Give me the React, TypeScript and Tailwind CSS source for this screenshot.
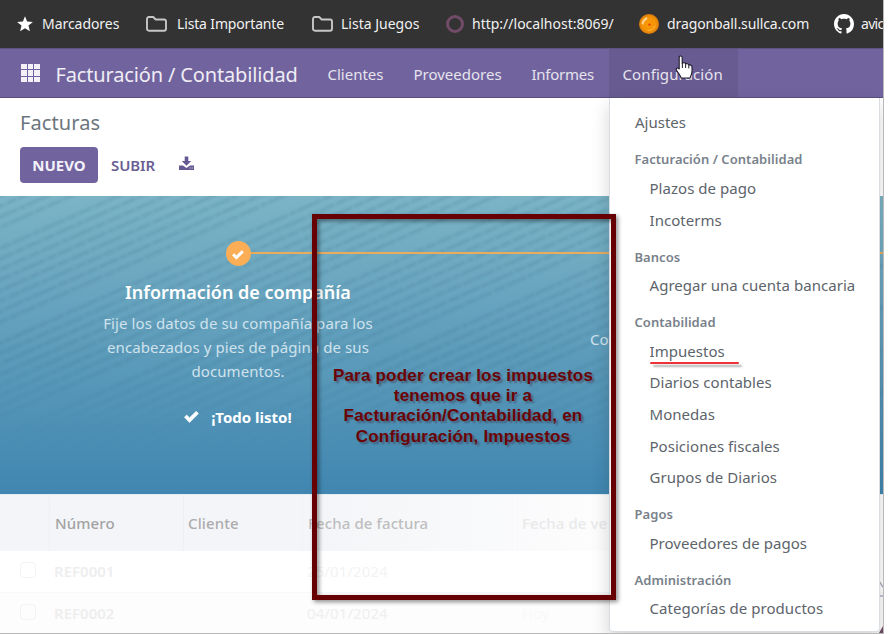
import React from "react";

const rows = Array.from({ length: 30 }, (_, i) => i);

function Folder() {
  return (
    <svg className="h-4 w-[21px] shrink-0" viewBox="0 0 21 16" fill="none" stroke="#c7c7c7" strokeWidth="1.9">
      <path d="M1 3.2Q1 1 3 1H7.2L9.7 3.5H18Q20 3.5 20 5.5V12.7Q20 14.7 18 14.7H3Q1 14.7 1 12.7Z" strokeLinejoin="round" />
    </svg>
  );
}

function Check({ className }: { className: string }) {
  return (
    <svg className={className} viewBox="0 0 15 12" fill="#fff">
      <path d="M.4 6.3 2.7 4 5.5 6.8 12.2.3 14.5 2.6 5.5 11.5Z" stroke="#fff" strokeWidth=".6" strokeLinejoin="round" />
    </svg>
  );
}

function Bookmarks() {
  return (
    <div className="flex h-[48px] items-center overflow-hidden bg-[#333333] pl-[17px] text-[14px] text-[#f1f1f1]">
      <svg className="h-[16px] w-[16px] shrink-0" viewBox="0 0 16 16" fill="#fff">
        <path d="M8 .3 10.1 5.5 15.9 5.9 11.5 9.6 12.9 15.3 8 12.2 3.1 15.3 4.5 9.6.1 5.9 5.9 5.5Z" />
      </svg>
      <span className="-mt-px ml-[9px] w-[104px] shrink-0 tracking-[-0.05px]">Marcadores</span>
      <Folder />
      <span className="-mt-px ml-[10px] w-[135px] shrink-0 tracking-[-0.15px]">Lista Importante</span>
      <Folder />
      <span className="-mt-px ml-[8px] w-[105px] shrink-0">Lista Juegos</span>
      <span className="h-[18px] w-[18px] shrink-0 rounded-full border-[3px] border-[#714b67]" />
      <span className="-mt-px ml-[8px] w-[167px] shrink-0">http://localhost:8069/</span>
      <svg className="h-5 w-5 shrink-0" viewBox="0 0 20 20">
        <defs>
          <radialGradient id="ball" cx=".5" cy=".5" r=".5">
            <stop offset="0" stopColor="#f99a08" />
            <stop offset=".7" stopColor="#f49306" />
            <stop offset="1" stopColor="#d9790a" />
          </radialGradient>
        </defs>
        <circle cx="10" cy="10" r="10" fill="url(#ball)" />
        <path d="M3.6 9.5A7 7 0 0 1 7.4 4.4" stroke="#fdd38b" strokeWidth="2.2" fill="none" strokeLinecap="round" />
        <path d="M9 16.5A7 7 0 0 0 16 12" stroke="#fbb94c" strokeWidth="1" fill="none" strokeLinecap="round" />
        <circle cx="10.5" cy="10.6" r="1.2" fill="#e8430b" />
      </svg>
      <span className="-mt-px ml-[8px] w-[167px] shrink-0 tracking-[-0.1px]">dragonball.sullca.com</span>
      <svg className="h-5 w-5 shrink-0" viewBox="0 0 16 16" fill="#fff">
        <path d="M8 0C3.58 0 0 3.58 0 8c0 3.54 2.29 6.53 5.47 7.59.4.07.55-.17.55-.38 0-.19-.01-.82-.01-1.49-2.01.37-2.53-.49-2.69-.94-.09-.23-.48-.94-.82-1.13-.28-.15-.68-.52-.01-.53.63-.01 1.08.58 1.23.82.72 1.21 1.87.87 2.33.66.07-.52.28-.87.51-1.07-1.78-.2-3.64-.89-3.64-3.95 0-.87.31-1.59.82-2.15-.08-.2-.36-1.02.08-2.12 0 0 .67-.21 2.2.82.64-.18 1.32-.27 2-.27s1.36.09 2 .27c1.53-1.04 2.2-.82 2.2-.82.44 1.1.16 1.92.08 2.12.51.56.82 1.27.82 2.15 0 3.07-1.87 3.75-3.65 3.95.29.25.54.73.54 1.48 0 1.07-.01 1.93-.01 2.2 0 .21.15.46.55.38A8.01 8.01 0 0 0 16 8c0-4.42-3.58-8-8-8Z" />
      </svg>
      <span className="-mt-px ml-[7px] shrink-0 tracking-[-0.7px]">avic</span>
    </div>
  );
}

function NavBar() {
  return (
    <div className="flex h-[50px] items-center border-y border-t-[#5f5384] border-b-[#594e7d] bg-[#71639e] pl-[21px] text-[15px] text-[#e6e3ee]">
      <div className="grid grid-cols-3 gap-px">
        {rows.slice(0, 9).map((i) => (
          <span key={i} className="h-[5.5px] w-[5.5px] bg-[#f3f1f7]" />
        ))}
      </div>
      <span className="ml-[16px] w-[272px] pt-[3px] text-[20px] tracking-[-0.15px] text-[#efedf4]">Facturación / Contabilidad</span>
      <span className="w-[86px] pt-[2px]">Clientes</span>
      <span className="w-[118px] pt-[2px]">Proveedores</span>
      <span className="w-[77px] pt-[2px] tracking-[-0.25px]">Informes</span>
      <div className="relative flex h-full w-[129px] items-center bg-[#685b91] pl-[14px] pt-[2px] tracking-[0.1px]">
        Configuración
        <svg className="absolute left-[66px] top-[6px] h-[25px] w-[20px]" viewBox="0 0 20 25">
          <path
            d="M4.2 2.2C4.2.5 7.2.5 7.2 2.2V8.5C8 7.4 10.4 7.6 10.6 9 11.6 8.2 13.6 8.6 13.8 10.1 15.2 9.5 17 10.3 17 12V16.5C17 18.8 15.8 20.6 15 23H6.2C5.2 19.8 3.4 18.2 1.5 15.4.3 13.4 2.5 12 4.2 14Z"
            fill="#fff" stroke="#1e1a2a" strokeWidth="1.1" strokeLinejoin="round"
          />
          <path d="M7.4 8.5V13M10.6 9.2V13M13.8 10.2V13.4" stroke="#1e1a2a" strokeWidth="1" />
        </svg>
      </div>
    </div>
  );
}

function ControlPanel() {
  return (
    <div className="h-[98px] bg-white pl-[20px] pt-[10px]">
      <h1 className="text-[20px] leading-[30px] tracking-[0.1px] text-[#6c757d]">Facturas</h1>
      <div className="mt-[9px] flex h-[36px] items-center text-[15px]">
        <button className="h-[36px] w-[78px] rounded-[4px] bg-[#71639e] pt-px font-bold text-[#f4f2f8]">NUEVO</button>
        <span className="ml-[13px] w-[68px] pt-px font-semibold tracking-[-0.1px] text-[#6b6093]">SUBIR</span>
        <svg className="mb-1 h-[15px] w-[15px]" viewBox="0 0 15 15" fill="#665893">
          <path d="M5.7.5H9.3V5H12.2L7.5 9.8 2.8 5H5.7Z" />
          <path d="M0 9.5H4L7.5 12 11 9.5H15V14H0Z" />
          <path d="M10.6 12h1M12.7 12h1" stroke="#fff" strokeWidth=".9" />
        </svg>
      </div>
    </div>
  );
}

function Texture() {
  return (
    <svg className="absolute inset-0 h-full w-full" viewBox="0 0 883 298" preserveAspectRatio="none">
      <defs>
        <filter id="soft" x="-10%" y="-10%" width="120%" height="120%">
          <feGaussianBlur stdDeviation="1.1" />
        </filter>
        <linearGradient id="fade" x1="0" y1="0" x2="0" y2="1">
          <stop offset="0" stopColor="#fff" />
          <stop offset=".55" stopColor="#fff" stopOpacity=".85" />
          <stop offset=".85" stopColor="#fff" stopOpacity="0" />
        </linearGradient>
        <mask id="fadeMask">
          <rect width="883" height="298" fill="url(#fade)" />
        </mask>
      </defs>
      <g mask="url(#fadeMask)">
        <g transform="rotate(-24)" filter="url(#soft)" stroke="#285f7c" strokeOpacity=".17" strokeWidth="3">
          {rows.concat(rows.map((i) => i + 30)).map((i) =>
            i % 9 === 4 ? null : (
              <path
                key={i}
                d={`M${-220 + ((i * 83) % 170)} ${i * 9.6}H${560 + ((i * 59) % 260)}`}
                strokeDasharray="12 1.6 21 2 7 1.4 26 2 11 1.6 16 2.2"
                strokeDashoffset={(i * 37) % 101}
              />
            ),
          )}
        </g>
      </g>
    </svg>
  );
}

function Banner() {
  return (
    <div className="relative h-[298px] overflow-hidden bg-linear-to-b from-[#7cb4c6] to-[#4086b0]">
      <Texture />
      <div className="relative flex">
        <div className="flex w-[476px] shrink-0 flex-col items-center pt-[45px] text-center">
          <div className="flex w-full items-center">
            <span className="w-[225.5px]" />
            <span className="flex h-[25px] w-[25px] items-center justify-center rounded-full bg-[#fbae56]">
              <Check className="mt-[3px] h-[10px] w-[12px]" />
            </span>
            <span className="-mt-[2px] h-[2px] flex-1 bg-[#e9ac5e]" />
          </div>
          <h2 className="mt-[12px] text-[18px] font-semibold leading-[28px] text-white">Información de compañía</h2>
          <p className="mt-[5px] w-[290px] whitespace-nowrap text-[15px] leading-[24.2px] tracking-[0.08px] text-[#d0e2ec]">
            Fije los datos de su compañía para los
            <br />
            encabezados y pies de página de sus
            <br />
            documentos.
          </p>
          <div className="mt-[21px] flex items-center text-[15px] font-bold leading-[24px] text-white">
            <Check className="mr-[12px] h-[12px] w-[15px]" />
            ¡Todo listo!
          </div>
        </div>
        <div className="flex-1 pt-[56px]">
          <div className="h-[2px] bg-[#e9ac5e]" />
          <p className="mt-[73px] pl-[114px] text-[15px] leading-[24px] text-[#d0e2ec]">Co</p>
        </div>
      </div>
    </div>
  );
}

function Box() {
  return <span className="-mt-[3px] ml-[20px] h-[16px] w-[16px] rounded-[4px] border border-[#f4f4f5]" />;
}

function Table() {
  return (
    <div className="h-[139px] bg-[#fdfdfd] text-[15px]">
      <div className="flex h-[57px] items-center border-t border-t-[#e4edf2] bg-linear-to-r from-[#f4f5f8] from-35% to-[#fefefe] to-75% font-medium tracking-[0.1px] text-[#a3a3a4]">
        <Box />
        <span className="ml-[13px] flex h-full w-[134px] items-center border-l border-[#eff0f2] pl-[5px]">Número</span>
        <span className="flex h-full w-[119px] items-center border-l border-[#eff0f2] pl-[4px] text-[#adadae]">Cliente</span>
        <span className="flex h-full w-[215px] items-center border-l border-[#f1f2f4] pl-[5px] text-[#bebebf]">Fecha de factura</span>
        <span className="flex h-full items-center border-l border-[#f8f8f9] pl-[4px] text-[#e9e9ea]">Fecha de ve</span>
      </div>
      <div className="flex h-[42px] items-center border-b border-[#f8f8f8] bg-white text-[#f3f3f3]">
        <Box />
        <span className="ml-[18px] w-[253px] font-semibold text-[#eeeeef]">REF0001</span>
        <span className="tracking-[0.1px]">25/01/2024</span>
      </div>
      <div className="flex h-[40px] items-center text-[#efefef]">
        <Box />
        <span className="ml-[18px] w-[253px] font-semibold text-[#eeeeef]">REF0002</span>
        <span className="w-[215px] tracking-[0.1px]">04/01/2024</span>
        <span className="text-[#f9f9f9]">Hoy</span>
      </div>
    </div>
  );
}

const menu: { title: string; items: string[] }[] = [
  { title: "Facturación / Contabilidad", items: ["Plazos de pago", "Incoterms"] },
  { title: "Bancos", items: ["Agregar una cuenta bancaria"] },
  { title: "Contabilidad", items: ["Impuestos", "Diarios contables", "Monedas", "Posiciones fiscales", "Grupos de Diarios"] },
  { title: "Pagos", items: ["Proveedores de pagos"] },
  { title: "Administración", items: ["Categorías de productos"] },
];

function Dropdown() {
  return (
    <div className="absolute left-[609px] top-[98px] h-[534px] w-[271px] rounded-b-[4px] border border-t-0 border-[#d9dde1] bg-white pt-[8.5px] text-[15px] text-[#5d646b] shadow-[0_8px_18px_rgba(0,0,0,0.17)]">
      <div className="h-[32.6px] pl-[25px] leading-[31.7px]">Ajustes</div>
      {menu.map((group) => (
        <div key={group.title}>
          <div className="h-[33.8px] pl-[24.5px] pt-[8.4px] text-[13px] font-semibold leading-[25px] tracking-[0.05px] text-[#78818a]">{group.title}</div>
          {group.items.map((item) => (
            <div key={item} className="relative h-[31.7px] pl-[39.5px] leading-[31.7px] tracking-[0.04px]">
              {item}
              {item === "Impuestos" && (
                <span className="absolute left-[40px] top-[26px] h-[2px] w-[89px] rounded-full bg-[#ee3338] shadow-[3px_3px_2px_rgba(0,0,0,0.3)]" />
              )}
            </div>
          ))}
        </div>
      ))}
    </div>
  );
}

function Annotation() {
  return (
    <div className="absolute left-[312px] top-[214px] h-[386px] w-[304px]">
      <svg className="absolute inset-0 h-full w-full overflow-visible drop-shadow-[2px_2px_2px_rgba(0,0,0,0.45)]" viewBox="0 0 304 386" fill="none">
        <rect x="2.5" y="2.5" width="299" height="381" stroke="#660002" strokeWidth="5" />
      </svg>
      <p className="relative -left-px whitespace-nowrap pt-[152px] text-center font-['Liberation_Sans',Arial,sans-serif] text-[17px] font-bold leading-[20.2px] tracking-[0.2px] text-[#6b0306] [text-shadow:2px_2px_2px_rgba(50,20,30,0.4)]">
        Para poder crear los impuestos
        <br />
        tenemos que ir a
        <br />
        Facturación/Contabilidad, en
        <br />
        Configuración, Impuestos
      </p>
    </div>
  );
}

export default function App() {
  return (
    <div className="relative h-[634px] w-[888px] overflow-hidden bg-white font-['Noto_Sans','Open_Sans',sans-serif]">
      <div className="relative h-[634px] w-[884px] overflow-hidden whitespace-nowrap border-b border-r border-[#b9b9b9]">
        <Bookmarks />
        <NavBar />
        <ControlPanel />
        <Banner />
        <Table />
        <svg className="absolute bottom-0 right-0 h-[56px] w-[4px]" viewBox="0 0 4 56">
          <path d="M0 4 4 10M0 19H4" stroke="#a9b2be" strokeWidth="1.5" />
          <path d="M4 49V56H0Z" fill="#714b67" />
        </svg>
        <Dropdown />
        <Annotation />
      </div>
    </div>
  );
}
